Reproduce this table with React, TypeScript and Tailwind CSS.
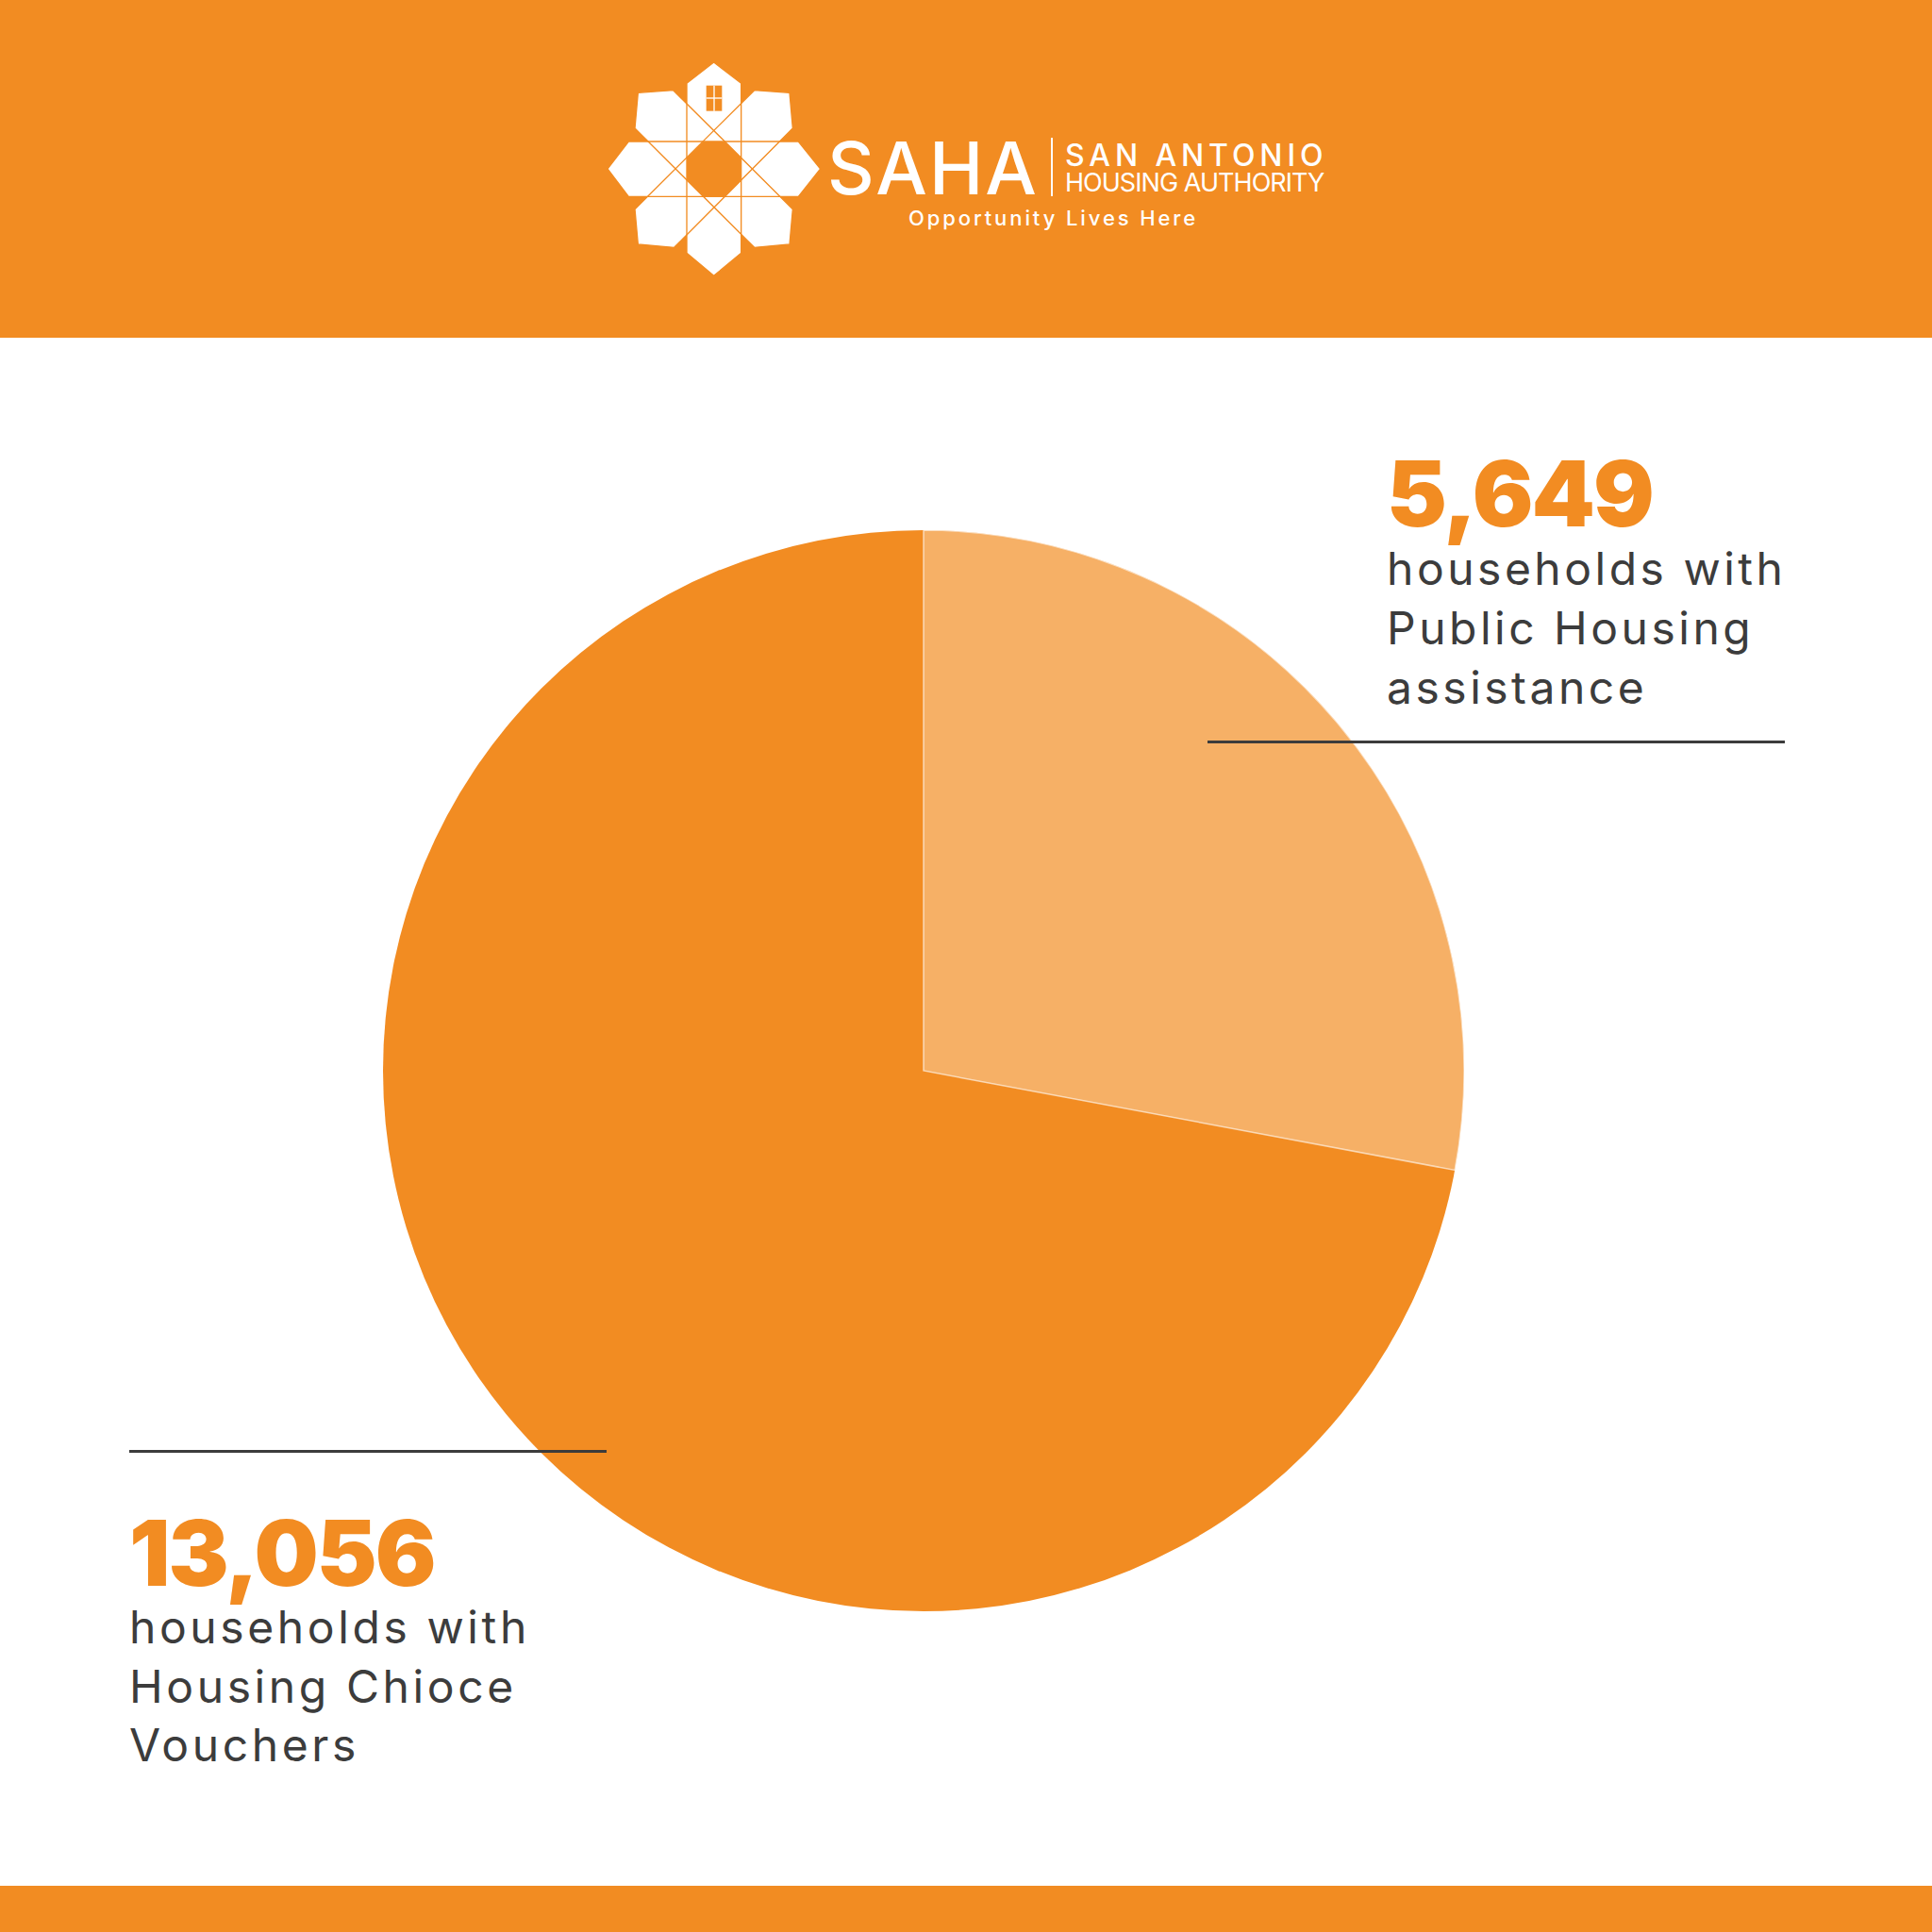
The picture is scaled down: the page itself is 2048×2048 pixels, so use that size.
const ORANGE = "#F28C22";

const SahaMark = () => {
  const bands = [
    "295,100 381,33 468,100 468,640 381,712 295,640",
    "43,372 110,285 650,285 720,372 650,460 110,460",
    "510,122 622,130 632,243 255,622 140,612 130,500",
    "140,130 252,122 632,500 622,612 510,622 130,243",
  ];
  return (
    <svg viewBox="40 30 684 684" className="w-[228px] h-[228px] shrink-0">
      {bands.map((p) => (
        <polygon key={p} points={p} fill="#ffffff" />
      ))}
      {bands.map((p) => (
        <polygon key={"s" + p} points={p} fill="none" stroke={ORANGE} strokeWidth={4} />
      ))}
      <polygon
        points="347,285 416,285 468,337 468,408 416,460 347,460 295,408 295,337"
        fill={ORANGE}
      />
      <rect x={357} y={107} width={50} height={81} fill={ORANGE} />
      <line x1={382} y1={107} x2={382} y2={188} stroke="#ffffff" strokeWidth={4} />
      <line x1={357} y1={147} x2={407} y2={147} stroke="#ffffff" strokeWidth={4} />
    </svg>
  );
};

const PieChart = () => (
  <svg width={2048} height={1641} viewBox="0 0 2048 1641" className="block">
    <circle cx={979} cy={777} r={573} fill={ORANGE} />
    <path
      d="M979 777 L979 204 A573 573 0 0 1 1542.2 882.4 Z"
      fill="#F6B066"
      stroke="#ffffff"
      strokeOpacity={0.6}
      strokeWidth={1.5}
    />
  </svg>
);

export default function App() {
  return (
    <div className="w-[2048px] h-[2048px] bg-white flex flex-col font-['Inter',sans-serif]">
      {/* header */}
      <header className="h-[358px] shrink-0 bg-[#F28C22] flex items-start pl-[643px] pt-[65px]">
        <SahaMark />
        <div className="flex flex-col mt-[75px] ml-[6px] text-white">
          <div className="flex items-start">
            <span className="text-[77px] leading-none font-medium tracking-[2px]">SAHA</span>
            <span className="w-[2px] h-[62px] bg-white mt-[6px] ml-[13px] mr-[13px]" />
            <div className="flex flex-col mt-[10px] whitespace-nowrap">
              <span className="text-[32px] leading-[30px] font-medium tracking-[4.9px]">SAN ANTONIO</span>
              <span className="text-[27px] leading-[27px] font-normal tracking-[-0.95px]">HOUSING AUTHORITY</span>
            </div>
          </div>
          <span className="text-[22px] leading-none font-medium tracking-[2.9px] mt-[3px] ml-[86px] whitespace-nowrap">
            Opportunity Lives Here
          </span>
        </div>
      </header>

      {/* chart */}
      <main className="relative h-[1641px] shrink-0">
        <PieChart />

        <div className="absolute left-[1280px] top-[117px] w-[612px] flex flex-col">
          <div className="pl-[190px] flex flex-col whitespace-nowrap">
            <span className="text-[96px] leading-none font-black tracking-[-2px] text-[#F28C22]">5,649</span>
            <p className="text-[48px] leading-[63px] tracking-[3.5px] text-[#3c3c3c]">
              households with
              <br />
              Public Housing
              <br />
              assistance
            </p>
          </div>
          <div className="h-[3px] bg-[#3c3c3c] mt-[25px]" />
        </div>

        <div className="absolute left-[137px] top-[1179px] flex flex-col whitespace-nowrap">
          <div className="w-[506px] h-[3px] bg-[#3c3c3c]" />
          <span className="text-[96px] leading-none font-black tracking-[-2px] text-[#F28C22] mt-[58px]">
            13,056
          </span>
          <p className="text-[48px] leading-[62.5px] tracking-[3.6px] text-[#3c3c3c]">
            households with
            <br />
            Housing Chioce
            <br />
            Vouchers
          </p>
        </div>
      </main>

      {/* footer bar */}
      <div className="h-[49px] shrink-0 bg-[#F28C22]" />
    </div>
  );
}
